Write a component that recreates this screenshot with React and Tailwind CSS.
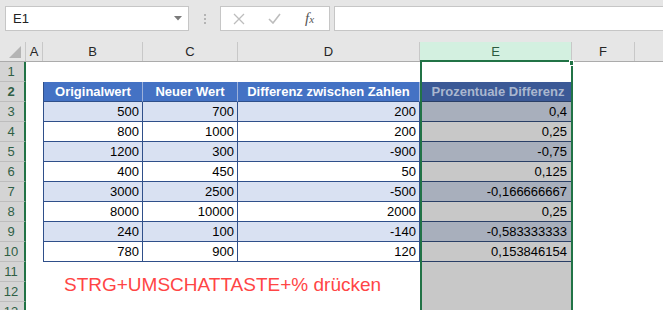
import React from 'react';

const COLS = [
  { key: 'A', w: 'w-[17px]' },
  { key: 'B', w: 'w-[100px]' },
  { key: 'C', w: 'w-[95px]' },
  { key: 'D', w: 'w-[182px]' },
  { key: 'E', w: 'w-[152px]' },
  { key: 'F', w: 'w-[63px]' },
];

const DATA = [
  ['500', '700', '200', '0,4'],
  ['800', '1000', '200', '0,25'],
  ['1200', '300', '-900', '-0,75'],
  ['400', '450', '50', '0,125'],
  ['3000', '2500', '-500', '-0,166666667'],
  ['8000', '10000', '2000', '0,25'],
  ['240', '100', '-140', '-0,583333333'],
  ['780', '900', '120', '0,153846154'],
];

const HEADERS = ['Originalwert', 'Neuer Wert', 'Differenz zwischen Zahlen', 'Prozentuale Differenz'];

const TopBar = () => (
  <div className="flex h-[42px] items-start bg-[#e6e6e6] pt-[6px]">
    <div className="ml-[5px] flex h-[25px] w-[184px] items-center justify-between border border-[#c6c6c6] bg-white pl-[7px] pr-[6px] text-[13px] text-[#222]">
      <span>E1</span>
      <svg width="8" height="5" viewBox="0 0 8 5">
        <path d="M0 0 L8 0 L4 4.5 Z" fill="#7a7a7a" />
      </svg>
    </div>
    <div className="ml-[15px] mt-[8px] flex flex-col gap-[2px]">
      <span className="h-[2px] w-[2px] bg-[#b4b4b4]" />
      <span className="h-[2px] w-[2px] bg-[#b4b4b4]" />
      <span className="h-[2px] w-[2px] bg-[#b4b4b4]" />
    </div>
    <div className="ml-[14px] flex h-[25px] w-[110px] items-center border border-[#c6c6c6] bg-white">
      <svg className="ml-[12px]" width="12" height="12" viewBox="0 0 12 12">
        <path d="M1 1 L11 11 M11 1 L1 11" stroke="#bdbdbd" strokeWidth="1.3" />
      </svg>
      <svg className="ml-[23px]" width="13" height="11" viewBox="0 0 13 11">
        <path d="M1 6 L5 10 L12 1" stroke="#bdbdbd" strokeWidth="1.6" fill="none" />
      </svg>
      <span className="ml-[24px] font-['Liberation_Serif',serif] text-[15px] italic text-[#555]">
        f<span className="text-[11px]">x</span>
      </span>
    </div>
    <div className="ml-[4px] h-[25px] flex-1 border border-r-0 border-[#c6c6c6] bg-white" />
  </div>
);

const ColumnHeaders = () => (
  <div className="flex h-[20px] border-b border-[#ababab] bg-[#e6e6e6] text-[13px] leading-[19px] text-[#262626]">
    <div className="relative w-[26px] shrink-0 border-r border-[#c8c8c8]">
      <svg className="absolute bottom-[3px] right-[4px]" width="12" height="12" viewBox="0 0 12 12">
        <path d="M12 0 L12 12 L0 12 Z" fill="#b4b4b4" />
      </svg>
    </div>
    {COLS.map((c) => (
      <div
        key={c.key}
        className={`${c.w} shrink-0 border-r border-[#c8c8c8] text-center ${
          c.key === 'E' ? 'bg-[#d3f0e0] text-[#2b5c40]' : ''
        }`}
      >
        {c.key}
      </div>
    ))}
    <div className="flex-1" />
  </div>
);

const RowHeader = ({ n }) => (
  <div className="h-[20px] w-[26px] shrink-0 border-b border-r-2 border-b-[#bdbdbd] border-r-[#217346] bg-[#d4d4d4] pr-[2px] text-center text-[13px] leading-[19px] text-[#2f5f45]">
    {n}
  </div>
);

const EmptyRow = ({ n, eGray }) => (
  <div className="flex h-[20px]">
    <RowHeader n={n} />
    <div className="w-[17px] shrink-0" />
    <div className="w-[100px] shrink-0" />
    <div className="w-[95px] shrink-0" />
    <div className="w-[182px] shrink-0" />
    <div className={`w-[152px] shrink-0 ${eGray ? 'bg-[#c8c8c8]' : ''}`} />
    <div className="flex-1" />
  </div>
);

const HeaderRow = () => (
  <div className="flex h-[20px] font-bold text-[13px] leading-[19px]">
    <RowHeader n={2} />
    <div className="w-[17px] shrink-0" />
    <div className="w-[100px] shrink-0 border-b border-l border-r border-b-[#2f4f8a] border-l-[#2f4f8a] border-r-[#9db1da] bg-[#4472c4] text-center text-white">
      {HEADERS[0]}
    </div>
    <div className="w-[95px] shrink-0 border-b border-r border-b-[#2f4f8a] border-r-[#9db1da] bg-[#4472c4] text-center text-white">
      {HEADERS[1]}
    </div>
    <div className="w-[182px] shrink-0 border-b border-r border-b-[#2f4f8a] border-r-[#9db1da] bg-[#4472c4] text-center text-white">
      {HEADERS[2]}
    </div>
    <div className="w-[152px] shrink-0 border-b border-b-[#2a3f66] bg-[#3b5996] pl-[4px] text-center text-[#aab7cf]">
      {HEADERS[3]}
    </div>
    <div className="flex-1" />
  </div>
);

const DataRow = ({ n, row, band }) => {
  const bg = band ? 'bg-[#d9e1f2]' : 'bg-white';
  return (
    <div className="flex h-[20px] text-[13px] leading-[20px] text-black">
      <RowHeader n={n} />
      <div className="w-[17px] shrink-0" />
      <div className={`w-[100px] shrink-0 border-b border-l border-r border-[#2f4f8a] pr-[3px] text-right ${bg}`}>
        {row[0]}
      </div>
      <div className={`w-[95px] shrink-0 border-b border-r border-[#2f4f8a] pr-[3px] text-right ${bg}`}>
        {row[1]}
      </div>
      <div className={`w-[182px] shrink-0 border-b border-r border-[#2f4f8a] pr-[3px] text-right ${bg}`}>
        {row[2]}
      </div>
      <div
        className={`w-[152px] shrink-0 border-b border-[#2a3f66] pr-[5px] text-right ${
          band ? 'bg-[#a8afbc]' : 'bg-[#c8c8c8]'
        }`}
      >
        {row[3]}
      </div>
      <div className="flex-1" />
    </div>
  );
};

export default function App() {
  return (
    <div className="relative h-[310px] w-[663px] overflow-hidden bg-white font-['Liberation_Sans',Arial,sans-serif]">
      <TopBar />
      <ColumnHeaders />
      <div className="flex flex-col">
        <EmptyRow n={1} />
        <HeaderRow />
        {DATA.map((row, i) => (
          <DataRow key={i} n={i + 3} row={row} band={i % 2 === 0} />
        ))}
        <EmptyRow n={11} eGray />
        <EmptyRow n={12} eGray />
        <EmptyRow n={13} eGray />
      </div>

      {/* floating text box over rows 11-12 */}
      <div className="absolute left-[64px] top-[274px] text-[19px] leading-[22px] text-[#ff4545]">
        STRG+UMSCHATTASTE+% drücken
      </div>

      {/* selection of column E */}
      <div className="absolute bottom-0 left-[420px] top-[60px] w-[153px] border-2 border-b-0 border-[#217346]" />
      <div className="absolute left-[569px] top-[60px] h-[6px] w-[5px] border border-white bg-[#217346]" />
    </div>
  );
}
